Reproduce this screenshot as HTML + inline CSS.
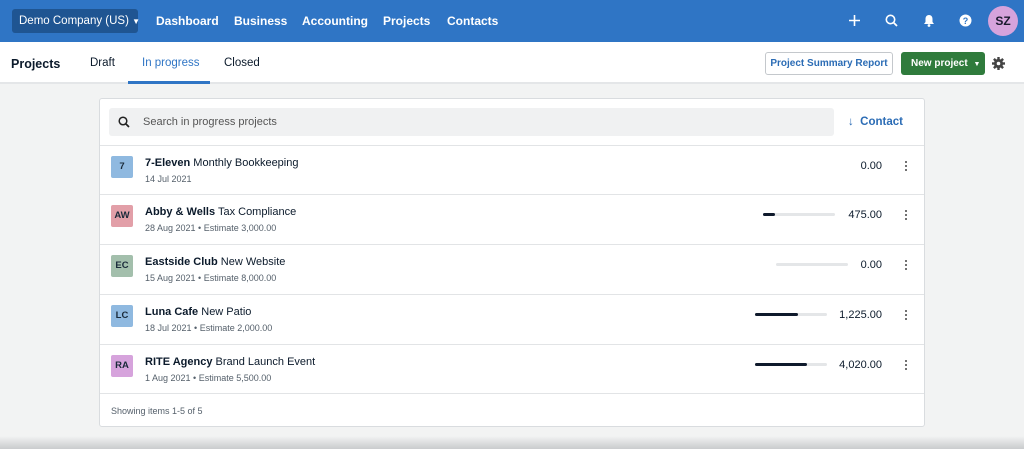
<!DOCTYPE html>
<html><head><style>
*{box-sizing:border-box;margin:0;padding:0}
body{width:1024px;height:449px;overflow:hidden;background:#f2f3f3;font-family:"Liberation Sans",sans-serif;color:#0b1a2b;position:relative}
.nav{position:absolute;left:0;top:0;width:1024px;height:42px;background:#2f75c5}
.org{position:absolute;left:12px;top:9px;width:126px;height:24px;background:#1f5592;border-radius:3px;color:#fff;font-size:11.5px;line-height:24px;padding-left:7px;white-space:nowrap}
.nl{position:absolute;top:14px;color:#fff;font-weight:bold;font-size:12px;white-space:nowrap}
.ic{position:absolute;top:12px;color:#fff}
.av{position:absolute;left:988px;top:6px;width:30px;height:30px;border-radius:50%;background:#d6a3dc;color:#1a1a2e;font-weight:bold;font-size:12px;line-height:30px;text-align:center}
.sub{position:absolute;left:0;top:42px;width:1024px;height:42px;background:#fff;border-bottom:2px solid #e4e6e8}
.t{position:absolute;top:15px;font-size:11.5px}
.btn1{position:absolute;left:765px;top:52px;width:128px;height:23px;border:1px solid #c4c8cc;border-radius:3px;color:#2b6cb5;font-weight:bold;font-size:10px;line-height:21px;text-align:center;white-space:nowrap}
.btn2{position:absolute;left:901px;top:52px;width:84px;height:23px;background:#2f7b3c;border-radius:3px;color:#fff;font-weight:bold;font-size:10px;line-height:23px;padding-left:10px;white-space:nowrap}
.card{position:absolute;left:99px;top:98px;width:826px;height:329px;background:#fff;border:1px solid #d9dcdf;border-radius:3px}
.search{position:absolute;left:9px;top:9px;width:725px;height:28px;background:#f0f1f2;border-radius:3px}
.row{position:absolute;left:0;width:824px;height:50px;border-top:1px solid #e2e4e6}
.badge{position:absolute;left:11px;top:10px;width:22px;height:22px;border-radius:2px;font-size:9.5px;font-weight:bold;text-align:center;line-height:22px;color:#1a2a3a}
.tt{position:absolute;left:45px;top:11px;font-size:11px}
.dd{position:absolute;left:45px;top:28px;font-size:9px;color:#55606b}
.amt{position:absolute;right:42px;top:14px;font-size:11px}
.dots{position:absolute;right:16px;top:15px;width:3px}
.dots i{display:block;width:2.4px;height:2.4px;border-radius:50%;background:#444;margin-bottom:1.6px}
.bar{position:absolute;top:18px;width:72px;height:3px;background:#e4e6e8;border-radius:2px}
.bar b{display:block;height:3px;background:#0f1a2c;border-radius:2px}
</style></head><body>
<div class="nav">
<div class="org">Demo Company (US) <span style="font-size:8px">▼</span></div>
<div class="nl" style="left:156px">Dashboard</div>
<div class="nl" style="left:234px">Business</div>
<div class="nl" style="left:302px">Accounting</div>
<div class="nl" style="left:383px">Projects</div>
<div class="nl" style="left:447px">Contacts</div>
<svg class="ic" style="left:849px;top:15px" width="11" height="11"><path d="M5.5 0v11M0 5.5h11" stroke="#fff" stroke-width="1.6"/></svg>
<svg class="ic" style="left:885px;top:14px" width="13" height="13"><circle cx="5.5" cy="5.5" r="4.2" stroke="#fff" stroke-width="1.6" fill="none"/><path d="M8.5 8.5l3.5 3.5" stroke="#fff" stroke-width="1.8"/></svg>
<svg class="ic" style="left:923px;top:14px" width="12" height="13"><path d="M6 1c-2.5 0-3.5 2-3.5 4v3L1 10h10L9.5 8V5c0-2-1-4-3.5-4z" fill="#fff"/><circle cx="6" cy="11.5" r="1.4" fill="#fff"/></svg>
<svg class="ic" style="left:959px;top:14px" width="13" height="13"><circle cx="6.5" cy="6.5" r="6" fill="#fff"/><text x="6.5" y="10" font-size="9" font-weight="bold" text-anchor="middle" fill="#2f75c5" font-family="Liberation Sans">?</text></svg>
<div class="av">SZ</div>
</div>
<div class="sub">
<div class="t" style="left:11px;font-weight:bold;font-size:12.5px">Projects</div>
<div class="t" style="left:90px">Draft</div>
<div class="t" style="left:142px;color:#2f75c5">In progress</div>
<div style="position:absolute;left:128px;top:39px;width:82px;height:3px;background:#2f75c5"></div>
<div class="t" style="left:224px">Closed</div>
</div>
<div class="btn1">Project Summary Report</div>
<div class="btn2">New project <span style="font-size:7px;margin-left:3px">▼</span></div>
<svg style="position:absolute;left:992px;top:57px" width="13" height="13" viewBox="0 0 13 13"><g fill="#444"><circle cx="6.5" cy="6.5" r="4.6"/><rect x="5.3" y="0" width="2.4" height="13"/><rect x="0" y="5.3" width="13" height="2.4"/><rect x="5.3" y="0" width="2.4" height="13" transform="rotate(45 6.5 6.5)"/><rect x="5.3" y="0" width="2.4" height="13" transform="rotate(-45 6.5 6.5)"/></g><circle cx="6.5" cy="6.5" r="1.8" fill="#fff"/></svg>
<div class="card">
<div class="search">
<svg style="position:absolute;left:9px;top:8px" width="12" height="12"><circle cx="5" cy="5" r="3.8" stroke="#222" stroke-width="1.5" fill="none"/><path d="M7.8 7.8l3.2 3.2" stroke="#222" stroke-width="1.7"/></svg>
<div style="position:absolute;left:34px;top:8px;font-size:11px;color:#555">Search in progress projects</div>
</div>
<div style="position:absolute;left:748px;top:17px;font-size:11.5px;font-weight:bold;color:#2b6cb5">↓ &nbsp;Contact</div>
<div class="row" style="top:46px"><div class="badge" style="background:#8fb9e0">7</div><div class="tt"><b>7-Eleven</b> Monthly Bookkeeping</div><div class="dd">14 Jul 2021</div><div class="amt">0.00</div><div class="dots"><i></i><i></i><i></i></div></div>
<div class="row" style="top:95px"><div class="badge" style="background:#e29fa8">AW</div><div class="tt"><b>Abby &amp; Wells</b> Tax Compliance</div><div class="dd">28 Aug 2021 • Estimate 3,000.00</div><div class="bar" style="left:663px"><b style="width:12px"></b></div><div class="amt">475.00</div><div class="dots"><i></i><i></i><i></i></div></div>
<div class="row" style="top:145px"><div class="badge" style="background:#a3bfac">EC</div><div class="tt"><b>Eastside Club</b> New Website</div><div class="dd">15 Aug 2021 • Estimate 8,000.00</div><div class="bar" style="left:676px"></div><div class="amt">0.00</div><div class="dots"><i></i><i></i><i></i></div></div>
<div class="row" style="top:195px"><div class="badge" style="background:#8fb9e0">LC</div><div class="tt"><b>Luna Cafe</b> New Patio</div><div class="dd">18 Jul 2021 • Estimate 2,000.00</div><div class="bar" style="left:655px"><b style="width:43px"></b></div><div class="amt">1,225.00</div><div class="dots"><i></i><i></i><i></i></div></div>
<div class="row" style="top:245px"><div class="badge" style="background:#d6a3dc">RA</div><div class="tt"><b>RITE Agency</b> Brand Launch Event</div><div class="dd">1 Aug 2021 • Estimate 5,500.00</div><div class="bar" style="left:655px"><b style="width:52px"></b></div><div class="amt">4,020.00</div><div class="dots"><i></i><i></i><i></i></div></div>
<div class="row" style="top:294px;height:34px"><div style="position:absolute;left:11px;top:12px;font-size:9px;color:#55606b">Showing items 1-5 of 5</div></div>
</div>
<div style="position:absolute;left:0;top:436px;width:1024px;height:13px;background:linear-gradient(#f2f3f3,#c9cbcd)"></div>
</body></html>
